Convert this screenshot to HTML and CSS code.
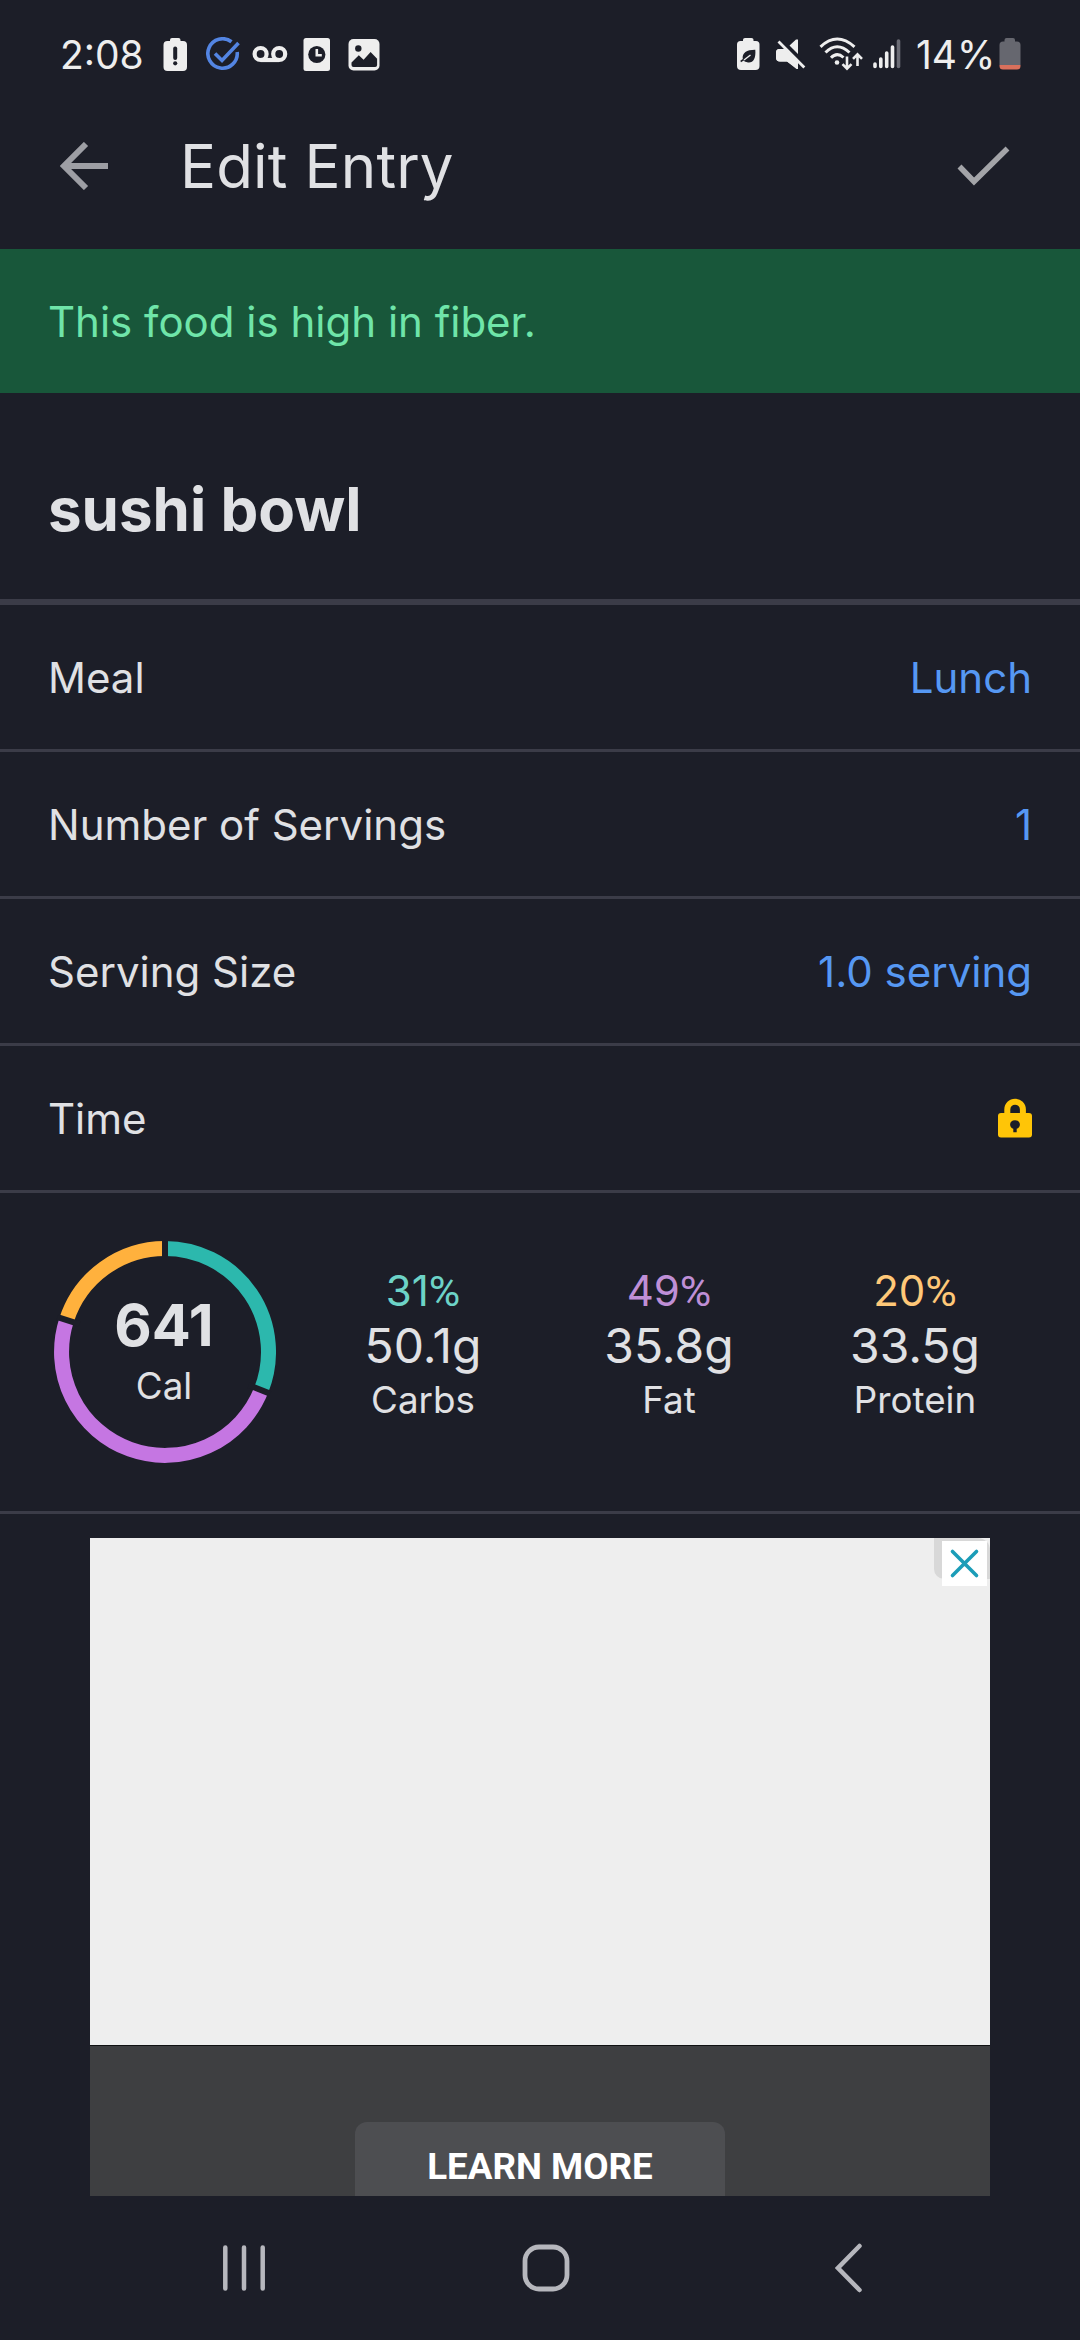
FILE: index.html
```html
<!DOCTYPE html>
<html lang="en">
<head>
<meta charset="utf-8">
<title>Edit Entry</title>
<link rel="stylesheet" href="styles.css">
</head>
<body>
<div class="screen">
  <header class="status">
    <span class="clock">2:08</span>
    <svg class="s-alert" viewBox="0 0 24 34" width="24" height="34"><path fill="#eee" d="M7 3.500V3a2 2 0 0 1 2-2h6.500a2 2 0 0 1 2 2v1H20a4 4 0 0 1 4 4v22a4 4 0 0 1-4 4H4.500a4 4 0 0 1-4-4V8a4 4 0 0 1 4-4H7z"/><path stroke="#1c1e28" stroke-width="4" stroke-linecap="round" d="M12.200 11.500v9.500"/><circle cx="12.200" cy="26.300" r="2.100" fill="#1c1e28"/></svg>
    <svg class="s-check" viewBox="0 0 34 34" width="34" height="34" fill="none" stroke="#5385e3" stroke-width="3.600"><path d="M25.500 4.800A14.700 14.700 0 1 0 31.200 15"/><path d="M9 16.500l7 7L32.500 6"/></svg>
    <svg class="s-voice" viewBox="0 0 36 34" width="36" height="34" fill="none" stroke="#eee" stroke-width="4.200"><circle cx="8.600" cy="17" r="6"/><circle cx="27.200" cy="17" r="6"/><path d="M8.600 23h18.600"/></svg>
    <svg class="s-sim" viewBox="0 0 28 34" width="28" height="34"><rect x=".5" y="1" width="26.500" height="33" rx="2.500" fill="#eee"/><circle cx="13.800" cy="17.500" r="8.600" fill="#1c1e28"/><path d="M13.800 12v6.200h5" fill="none" stroke="#eee" stroke-width="2.600"/></svg>
    <svg class="s-image" viewBox="0 0 32 34" width="32" height="34"><rect x=".5" y="2" width="31" height="31.500" rx="5" fill="#eee"/><circle cx="10.300" cy="11.500" r="3.200" fill="#1c1e28"/><path fill="#1c1e28" d="M3.500 25.500l7.300-7.300 4.800 4.600 7-7.800 6.500 6.800V28a2 2 0 0 1-2 2H5.500a2 2 0 0 1-2-2z"/></svg>
    <svg class="s-saver" viewBox="0 0 23 34" width="23" height="34"><path fill="#eee" d="M6 4V2.800Q6 1 8 1h6.500q2 0 2 1.800V4H19a3.500 3.500 0 0 1 3.500 3.500V29a4 4 0 0 1-4 4H4a4 4 0 0 1-4-4V7.500A3.500 3.500 0 0 1 3.500 4z"/><path fill="#1c1e28" d="M18.300 12.800c.8 9-2.300 13.400-7.300 12.700-2.300-.3-3.500-1-4.300-1.900l-2.700 1.600-.7-1.400 2.500-1.700c-1.100-6.200 4.200-9.400 12.500-9.300z"/><path d="M7 23l6.500-5" stroke="#eee" stroke-width="1.400"/></svg>
    <svg class="s-mute" viewBox="0 0 30 34" width="30" height="34"><path fill="#eee" d="M3 12h5.500L22 25.500V32h-1.500L11 24.500H4Q0 24.500 0 20.500v-5Q0 12 3 12zM13.500 8.500L20 2.500h2V17z"/><path d="M2.500 5L28.500 31" stroke="#1c1e28" stroke-width="7"/><path fill="#eee" d="M0 15.500Q0 12 4 12h5.500L22 24.500V31h-1.500L11 24.500H4Q0 24.500 0 20.500z"/><path d="M2.500 4.500L28.300 30.500" stroke="#eee" stroke-width="2.800"/></svg>
    <svg class="s-wifi" viewBox="0 0 45 34" width="45" height="34" fill="none" stroke="#eee" stroke-width="3"><path d="M1.500 9.800Q18-5.800 35.500 9.800M6.500 15.500Q18 4 30.500 15.500M12 20.800Q18 14.500 24.500 20.500"/><circle cx="18" cy="25.500" r="2.300" fill="#eee" stroke="none"/><path stroke-width="2.600" d="M28 19.500v12M23.500 27.200l4.500 4.500 4.500-4.500M38.500 29V17.500M34 21.800l4.500-4.500 4.500 4.500"/></svg>
    <svg class="s-signal" viewBox="0 0 28 34" width="28" height="34" stroke="#eee" stroke-width="3.600" stroke-linecap="round"><path d="M2 27v2.500M7.800 22v7.500M13.700 16v13.500M19.500 10v19.500"/><path stroke="#6b6c75" d="M25.500 4v25.500"/></svg>
    <span class="percent">14%</span>
    <svg class="s-batt" viewBox="0 0 22 34" width="22" height="34"><path fill="#66676f" d="M5.500 4.500V3q0-2 2-2h6.500q2 0 2 2v1.500H18a3.500 3.500 0 0 1 3.500 3.500V28H.5V8A3.500 3.500 0 0 1 4 4.500z"/><path fill="#d9705c" d="M.5 28h21v1a3.500 3.500 0 0 1-3.500 3.500H4A3.500 3.500 0 0 1 .5 29z"/></svg>
  </header>

  <div class="appbar">
    <svg class="back" viewBox="0 0 48 48" width="48" height="48" fill="none" stroke="#9d9ea4" stroke-width="6"><path d="M26 2L4 24l22 22M4 24h44"/></svg>
    <h1 class="title">Edit Entry</h1>
    <svg class="done" viewBox="0 0 54 42" width="54" height="42" fill="none" stroke="#a3a4a8" stroke-width="5.500"><path d="M2.500 21.500L17 36.500 50.500 3.500"/></svg>
  </div>

  <div class="banner">This food is high in fiber.</div>
  <h2 class="food">sushi bowl</h2>

  <div class="row"><span>Meal</span><span class="value">Lunch</span></div>
  <div class="row"><span>Number of Servings</span><span class="value">1</span></div>
  <div class="row"><span>Serving Size</span><span class="value">1.0 serving</span></div>
  <div class="row"><span>Time</span>
    <svg class="lock" viewBox="0 0 34 40" width="34" height="40"><path fill="none" stroke="#ffc507" stroke-width="6" d="M9.300 16v-4.500a7.800 7.800 0 0 1 15.600 0V16"/><rect y="15" width="34" height="24.500" rx="3" fill="#ffc507"/><path fill="#1c1e28" d="M17 22.300c3 0 4.900 1.900 4.900 4.300 0 2.200-1.400 3.700-3.200 4.200v3.400h-3.400v-3.400c-1.800-.5-3.200-2-3.200-4.200 0-2.400 1.900-4.300 4.900-4.300z"/></svg>
  </div>

  <section class="macros">
    <div class="ring">
      <svg class="ring-art" viewBox="-111 -111 222 222" width="222" height="222">
        <g fill="none" stroke-width="15">
          <path stroke="#2cb8ad" d="M0-103.500A103.500 103.500 0 0 1 96.230 38.100"/>
          <path stroke="#c576e2" d="M96.230 38.100A103.500 103.500 0 0 1-98.430-31.980"/>
          <path stroke="#ffb13d" d="M-98.430-31.980A103.500 103.500 0 0 1 0-103.500"/>
        </g>
        <path stroke="#1c1e28" stroke-width="6" d="M0-90v-23M83.680 33.130L105.060 41.600M-85.600-27.810L-107.470-34.920"/>
      </svg>
      <div class="ring-text"><b class="cal">641</b><span class="unit">Cal</span></div>
    </div>
    <div class="macro"><span class="pct carbs">31<span class="sign">%</span></span><span class="grams">50.1g</span><span class="name">Carbs</span></div>
    <div class="macro"><span class="pct fat">49<span class="sign">%</span></span><span class="grams">35.8g</span><span class="name">Fat</span></div>
    <div class="macro"><span class="pct protein">20<span class="sign">%</span></span><span class="grams">33.5g</span><span class="name">Protein</span></div>
  </section>

  <div class="ad">
    <div class="creative"></div>
    <div class="cta-area"><span class="cta">LEARN MORE</span></div>
    <div class="close-shade"></div>
    <div class="close"><svg viewBox="0 0 45 45" width="45" height="45" stroke="#1b9db8" stroke-width="3.600" stroke-linecap="round"><path d="M10.500 10.500l24 24M34.500 10.500l-24 24"/></svg></div>
  </div>

  <nav class="nav">
    <svg class="recents" viewBox="0 0 42 48" width="42" height="48" stroke="#b6b7bd" stroke-width="4.500" stroke-linecap="round"><path d="M2.300 3.500v41M21 3.500v41M39.700 3.500v41"/></svg>
    <svg class="home" viewBox="0 0 48 48" width="48" height="48"><rect x="3" y="3" width="42" height="42" rx="14" fill="none" stroke="#b6b7bd" stroke-width="4.800"/></svg>
    <svg class="nav-back" viewBox="0 0 28 50" width="28" height="50" fill="none" stroke="#b6b7bd" stroke-width="4.500" stroke-linecap="round"><path d="M24.500 3L3 25l21.500 22"/></svg>
  </nav>
</div>
</body>
</html>
```
FILE: styles.css
```css
* { box-sizing: border-box; }
body { margin: 0; background: #1c1e28; }
svg { display: block; flex: none; }

.screen {
  width: 1080px;
  height: 2340px;
  overflow: hidden;
  display: flex;
  flex-direction: column;
  background: #1c1e28;
  color: #e0e1e4;
  font-family: Inter, "Liberation Sans", sans-serif;
  font-size: 42px;
  white-space: nowrap;
}

/* status bar */
.status {
  flex: none;
  height: 108px;
  padding-left: 60px;
  display: flex;
  align-items: center;
  color: #eeeeee;
  font-size: 39px;
}
.clock { width: 103px; }
.s-check { margin-left: 19px; }
.s-voice { margin-left: 12px; }
.s-sim { margin-left: 15px; }
.s-image { margin-left: 17px; }
.s-saver { margin-left: 357px; }
.s-mute { margin-left: 16px; }
.s-wifi { margin-left: 13px; }
.s-signal { margin-left: 9px; }
.percent { width: 83px; margin-left: 15px; }

/* app bar */
.appbar {
  flex: none;
  height: 141px;
  padding: 0 69px 26px 60px;
  display: flex;
  align-items: center;
}
.title {
  margin: 0 auto 0 72px;
  font-size: 60px;
  font-weight: 400;
  letter-spacing: 0.15px;
}

.banner {
  flex: none;
  height: 144px;
  padding-left: 48px;
  line-height: 146px;
  background: #18573a;
  color: #6fe5a9;
}
.food {
  flex: none;
  margin: 0;
  height: 212px;
  padding: 21px 48px 0;
  border-bottom: 6px solid #3b3c48;
  line-height: 190px;
  font-size: 60px;
  font-weight: 700;
}

.row {
  flex: none;
  height: 147px;
  padding: 0 48px;
  border-bottom: 3px solid #3b3c48;
  display: flex;
  align-items: center;
  justify-content: space-between;
}
.value { color: #5698f3; }

/* calories and macros */
.macros {
  flex: none;
  height: 321px;
  padding-left: 54px;
  border-bottom: 3px solid #3b3c48;
  display: flex;
  align-items: center;
}
.ring {
  display: grid;
  place-items: center;
  width: 222px;
  margin-right: 24px;
}
.ring-art, .ring-text { grid-area: 1 / 1; }
.ring-text { text-align: center; padding-right: 2px; }
.cal { display: block; font-size: 57.75px; line-height: 68px; }
.unit { display: block; font-size: 36.75px; line-height: 54px; }
.macro {
  width: 246px;
  padding-bottom: 14px;
  display: flex;
  flex-direction: column;
  align-items: center;
}
.pct { line-height: 52px; }
.sign { font-family: Roboto, sans-serif; font-size: 43px; line-height: 1; }
.grams { font-size: 48px; line-height: 57px; }
.name { font-size: 36.75px; line-height: 52px; }
.carbs { color: #6dd3c7; }
.fat { color: #bf8fd6; }
.protein { color: #ffc878; }

/* advert */
.ad {
  flex: none;
  position: relative;
  width: 900px;
  height: 658px;
  margin: 24px auto 0;
  overflow: hidden;
}
.creative { height: 508px; background: #eeeeee; border-bottom: 1px solid #101112; }
.cta-area {
  height: 150px;
  padding-top: 76px;
  background: #3e3f41;
  display: flex;
  justify-content: center;
}
.cta {
  width: 370px;
  height: 100px;
  border-radius: 12px;
  background: #4d4e51;
  color: #ffffff;
  text-align: center;
  font: 700 36.750px/90px Roboto, sans-serif;
}
.close-shade {
  position: absolute;
  top: 0;
  right: 0;
  width: 56px;
  height: 41px;
  background: #d8d8d8;
  border-radius: 0 12px 0 10px;
}
.close {
  position: absolute;
  top: 3px;
  right: 3px;
  background: #ffffff;
}

/* system navigation */
.nav {
  flex: 1;
  display: flex;
  align-items: center;
  padding-left: 223px;
}
.home { margin-left: 257px; }
.nav-back { margin-left: 265px; }
```
